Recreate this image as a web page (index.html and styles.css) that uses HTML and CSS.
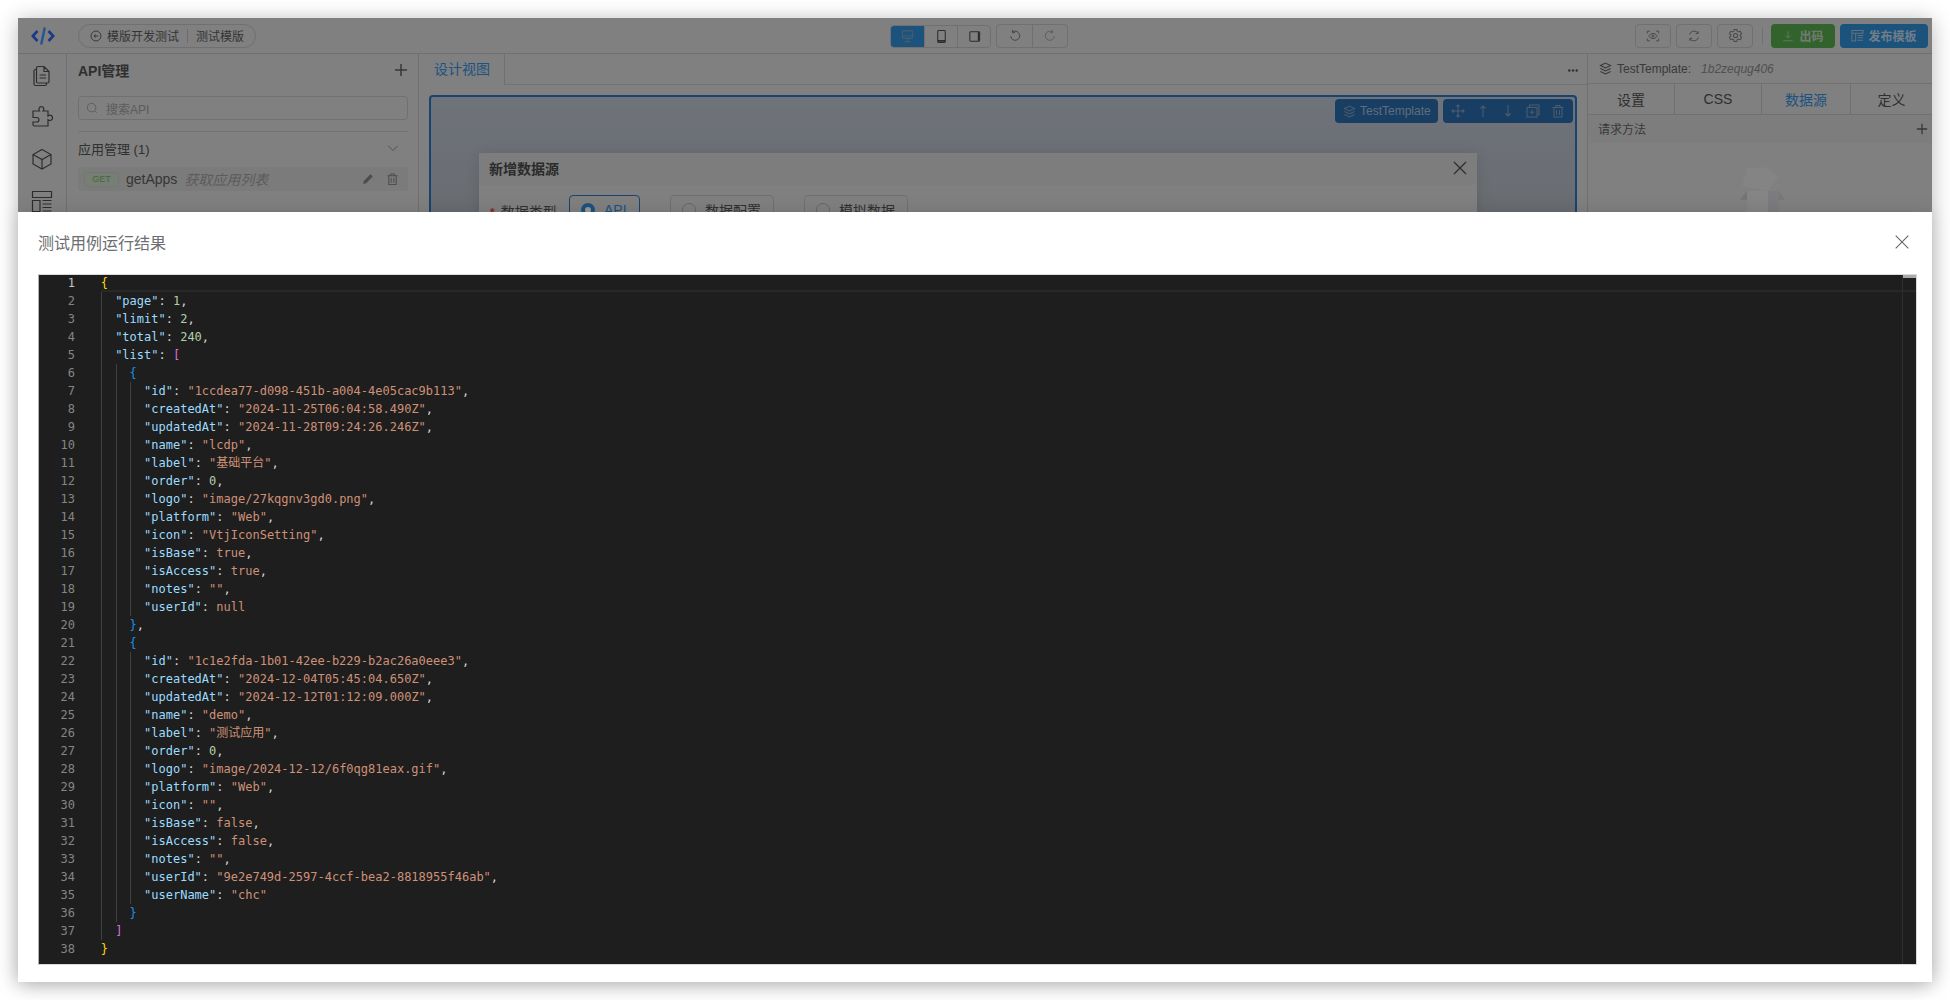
FILE: index.html
```html
<!DOCTYPE html>
<html lang="zh-CN">
<head>
<meta charset="utf-8">
<title>测试用例运行结果</title>
<link rel="stylesheet" href="styles.css">
</head>
<body>
<div class="window">
  <div class="app">
    <header class="topbar">
      <div class="brand">
        <svg class="logo" viewBox="0 0 24 20" width="24" height="20"><path d="M6.5 5 1.8 10l4.7 5M17.5 5l4.7 5-4.7 5" fill="none" stroke="#2c62e0" stroke-width="2.6"/><path d="M13.8 1.5 10.2 18.5" fill="none" stroke="#3a8ff0" stroke-width="2.4"/></svg>
        <div class="crumb">
          <svg class="ico" viewBox="0 0 14 14" width="12" height="12"><circle cx="7" cy="7" r="5.8"/><path d="M9.5 7H4.8M6.6 5 4.6 7l2 2"/></svg>
          <span>模版开发测试</span><i class="crumb-sep"></i><span>测试模版</span>
        </div>
      </div>
      <div class="center-tools">
        <div class="seg seg-low">
          <button class="seg-btn on"><svg class="ico" viewBox="0 0 16 16" width="15" height="15"><rect x="2.5" y="2" width="11" height="8" rx="1"/><path d="M2.5 7.5h11M8 10v3M4.5 13.5h7"/></svg></button>
          <button class="seg-btn"><svg class="ico" viewBox="0 0 16 16" width="15" height="15"><rect x="4" y="1.5" width="8" height="13" rx="1"/><path d="M4 12.6h8" stroke-width="2"/></svg></button>
          <button class="seg-btn"><svg class="ico" viewBox="0 0 16 16" width="15" height="15"><rect x="3" y="3" width="10.5" height="10" rx="1"/><path d="M12.5 3.5v9" stroke-width="2"/></svg></button>
        </div>
        <div class="seg">
          <button class="seg-btn wide"><svg class="ico" viewBox="0 0 16 16" width="14" height="14"><path d="M5 3.6A5.2 5.2 0 1 1 3 8M5.3 1 5 3.9l3 .4"/></svg></button>
          <button class="seg-btn wide faint"><svg class="ico" viewBox="0 0 16 16" width="14" height="14"><path d="M11 3.6A5.2 5.2 0 1 0 13 8M10.7 1l.3 2.9-3 .4"/></svg></button>
        </div>
      </div>
      <div class="actions">
        <button class="act"><svg class="ico" viewBox="0 0 16 16" width="14" height="14"><path d="M1.5 5V2.5h3M11.5 2.5h3V5M14.5 11v2.5h-3M4.5 13.5h-3V11M3 8s2-3 5-3 5 3 5 3-2 3-5 3-5-3-5-3z"/><circle cx="8" cy="8" r="1.2"/></svg></button>
        <button class="act"><svg class="ico" viewBox="0 0 16 16" width="14" height="14"><path d="M3 6.5A5.2 5.2 0 0 1 12.6 5M13 9.5A5.2 5.2 0 0 1 3.4 11M12.8 2.4V5.2H10M3.2 13.6V10.8H6"/></svg></button>
        <button class="act"><svg class="ico" viewBox="0 0 16 16" width="15" height="15"><path d="M6.6 1.5h2.8l.4 1.9 1.5.8 1.8-.7 1.4 2.4-1.4 1.3v1.6l1.4 1.3-1.4 2.4-1.8-.7-1.5.8-.4 1.9H6.6l-.4-1.9-1.5-.8-1.8.7-1.4-2.4 1.4-1.3V7.2L1.500 5.900l1.400-2.400 1.800.7 1.500-.8z"/><circle cx="8" cy="8" r="2.2"/></svg></button>
        <i class="act-sep"></i>
        <button class="cta green"><svg class="ico" viewBox="0 0 14 14" width="12" height="12"><path d="M7 1.500v7.500M4 6.500 7 9.500l3-3M1.500 12.500h11"/></svg>出码</button>
        <button class="cta blue"><svg class="ico" viewBox="0 0 14 14" width="13" height="13"><path d="M1 1.500h12v3H1zM1 4.500v8.500h4v-8.500M7 7h6M7 9.500h6M7 12h6"/></svg>发布模板</button>
      </div>
    </header>
    <div class="workspace">
      <nav class="rail">
        <svg class="ico rail-ico" viewBox="0 0 24 24" width="24" height="26"><path d="M8 3.500h6l5 5v10a1.500 1.500 0 0 1-1.500 1.500H8A1.500 1.500 0 0 1 6.500 18.500V5A1.500 1.500 0 0 1 8 3.500zM14 3.500v5h5M9.500 12h6.500M9.500 15h6.500"/><path d="M6.500 6.500H5.500A1.500 1.500 0 0 0 4 8v13a1.500 1.500 0 0 0 1.500 1.500H15a1.500 1.500 0 0 0 1.500-1.500v-1"/></svg>
        <svg class="ico rail-ico" viewBox="0 0 24 24" width="24" height="26"><path d="M9 3.500a2.500 2.500 0 0 1 4.800 0c.2 1-.3 1.800-.8 2.500H18v5c.8-.7 1.500-1 2.300-.8a2.700 2.700 0 0 1 0 5.300c-.8.100-1.500-.2-2.300-.8V21H4.500c-1 0-1.500-.6-1.500-1.500V17h3.500c1.500 0 2.500-1 2.500-2.200s-1-2.300-2.500-2.300H3V6h6.500C9 5.300 8.800 4.500 9 3.500z"/></svg>
        <svg class="ico rail-ico" viewBox="0 0 24 24" width="24" height="26"><path d="M12 2.500 21 7.500v9.500l-9 5-9-5V7.500zM3 7.500l9 5 9-5M12 12.500V22"/></svg>
        <svg class="ico rail-ico" viewBox="0 0 24 24" width="24" height="26"><path d="M2.500 2.500h19v6h-19zM2.500 11.500h7.500v11h-7.500zM12.500 11.500h9M12.500 15h9M12.500 18.500h9M12.500 22h9"/></svg>
      </nav>
      <aside class="panel">
        <div class="panel-head"><strong>API管理</strong><svg class="ico plus" viewBox="0 0 14 14" width="14" height="14"><path d="M7 1v12M1 7h12"/></svg></div>
        <div class="search"><svg class="ico light" viewBox="0 0 14 14" width="12" height="12"><circle cx="6.500" cy="6.500" r="5"/><path d="M10 10l2.500 2.500"/></svg><span>搜索API</span></div>
        <div class="group-row"><span>应用管理 (1)</span><svg class="ico" viewBox="0 0 14 14" width="12" height="12"><path d="M1.500 4.500 7 10l5.500-5.500"/></svg></div>
        <div class="api-row">
          <span class="tag">GET</span><span class="api-name">getApps</span><em class="api-desc">获取应用列表</em>
          <span class="row-icons">
            <svg viewBox="0 0 14 14" width="12" height="14"><path class="solid" d="M9.800 1.500 12.500 4.200 4.800 11.900 1.200 12.800 2.100 9.200z"/></svg>
            <svg class="ico" viewBox="0 0 14 14" width="13" height="14"><path d="M1.500 3.500h11M5 3.500V1.500h4v2M3 3.500v9.500h8V3.500M5.500 6v5M8.500 6v5"/></svg>
          </span>
        </div>
      </aside>
      <main class="stage">
        <div class="stage-tabs"><div class="stage-tab">设计视图</div><div class="stage-tab-fill"><svg class="dots" viewBox="0 0 10 3" width="10" height="3"><circle cx="1.300" cy="1.500" r="1.200"/><circle cx="5" cy="1.500" r="1.200"/><circle cx="8.700" cy="1.500" r="1.200"/></svg></div></div>
        <div class="canvas">
          <div class="canvas-tools">
            <span class="el-name"><svg class="ico pale" viewBox="0 0 14 14" width="13" height="13"><path d="M7 1.200 12.500 3.800 7 6.400 1.500 3.800zM1.500 7 7 9.600 12.500 7M1.500 10.200 7 12.800l5.500-2.600"/></svg>TestTemplate</span>
            <span class="el-tools">
              <svg class="ico pale" viewBox="0 0 14 14" width="14" height="14"><path d="M7 1v12M1 7h12M5.500 2.500 7 1l1.500 1.500M5.500 11.500 7 13l1.500-1.500M2.500 5.500 1 7l1.500 1.500M11.500 5.500 13 7l-1.500 1.500"/></svg>
              <svg class="ico pale" viewBox="0 0 14 14" width="14" height="14"><path d="M7 13V2M4.500 4.500 7 2l2.500 2.500"/></svg>
              <svg class="ico pale" viewBox="0 0 14 14" width="14" height="14"><path d="M7 1v11M4.500 9.500 7 12l2.500-2.500"/></svg>
              <svg class="ico pale" viewBox="0 0 14 14" width="14" height="14"><rect x="1" y="3.500" width="10" height="9.500"/><path d="M3.500 3.500V1h9.500v9.500H11M6 6v4.500M3.700 8.200h4.600"/></svg>
              <svg class="ico pale" viewBox="0 0 14 14" width="14" height="14"><path d="M1.500 3.500h11M5 3.500V1.500h4v2M3 3.500v9.500h8V3.500M5.500 6v5M8.500 6v5"/></svg>
            </span>
          </div>
          <section class="inner-dialog">
            <div class="inner-head"><span>新增数据源</span><svg class="ico dark" viewBox="0 0 14 14" width="14" height="14"><path d="M1 1l12 12M13 1 1 13"/></svg></div>
            <div class="inner-body">
              <label class="field"><b>*</b>数据类型</label>
              <span class="radio checked"><i></i>API</span>
              <span class="radio r2"><i></i>数据配置</span>
              <span class="radio r3"><i></i>模拟数据</span>
            </div>
          </section>
        </div>
      </main>
      <aside class="props">
        <div class="props-head"><svg class="ico" viewBox="0 0 14 14" width="13" height="13"><path d="M7 1.200 12.500 3.800 7 6.400 1.500 3.800zM1.500 7 7 9.600 12.500 7M1.500 10.200 7 12.800l5.500-2.600"/></svg><span>TestTemplate:</span><em>1b2zequg406</em></div>
        <div class="props-tabs"><div>设置</div><div>CSS</div><div class="on">数据源</div><div>定义</div></div>
        <div class="props-row"><span>请求方法</span><svg class="ico plus" viewBox="0 0 14 14" width="12" height="12"><path d="M7 1v12M1 7h12"/></svg></div>
        <div class="empty">
          <svg viewBox="0 0 50 46" width="50" height="46"><path d="M8 1 26 0 40 9 29 24 3 19z" fill="#dcdcde" /><path d="M8 24h32v22H8z" fill="#dedee0"/><path d="M29 24h11v22H29z" fill="#cfcfd3"/><path d="M8 24 1 33h7z" fill="#c4c4c7"/><path d="M40 24l6 9h-6z" fill="#c8c8cc"/></svg>
        </div>
      </aside>
    </div>
  </div>
  <div class="overlay"></div>
  <section class="modal">
    <div class="modal-head"><span>测试用例运行结果</span><svg class="ico modal-close" viewBox="0 0 14 14" width="14" height="14"><path d="M.7.7l12.600 12.600M13.300.7.7 13.300"/></svg></div>
    <div class="editor">
      <i class="guide g1"></i><i class="guide g2"></i><i class="guide g3"></i><i class="guide g4"></i>
      <i class="ruler"></i><i class="deco"></i>
      <div class="line active"><span class="num">1</span><span class="code"><span class="y">{</span></span></div>
      <div class="line"><span class="num">2</span><span class="code">  <span class="k">"page"</span>: <span class="n">1</span>,</span></div>
      <div class="line"><span class="num">3</span><span class="code">  <span class="k">"limit"</span>: <span class="n">2</span>,</span></div>
      <div class="line"><span class="num">4</span><span class="code">  <span class="k">"total"</span>: <span class="n">240</span>,</span></div>
      <div class="line"><span class="num">5</span><span class="code">  <span class="k">"list"</span>: <span class="p">[</span></span></div>
      <div class="line"><span class="num">6</span><span class="code">    <span class="u">{</span></span></div>
      <div class="line"><span class="num">7</span><span class="code">      <span class="k">"id"</span>: <span class="s">"1ccdea77-d098-451b-a004-4e05cac9b113"</span>,</span></div>
      <div class="line"><span class="num">8</span><span class="code">      <span class="k">"createdAt"</span>: <span class="s">"2024-11-25T06:04:58.490Z"</span>,</span></div>
      <div class="line"><span class="num">9</span><span class="code">      <span class="k">"updatedAt"</span>: <span class="s">"2024-11-28T09:24:26.246Z"</span>,</span></div>
      <div class="line"><span class="num">10</span><span class="code">      <span class="k">"name"</span>: <span class="s">"lcdp"</span>,</span></div>
      <div class="line"><span class="num">11</span><span class="code">      <span class="k">"label"</span>: <span class="s">"基础平台"</span>,</span></div>
      <div class="line"><span class="num">12</span><span class="code">      <span class="k">"order"</span>: <span class="n">0</span>,</span></div>
      <div class="line"><span class="num">13</span><span class="code">      <span class="k">"logo"</span>: <span class="s">"image/27kqgnv3gd0.png"</span>,</span></div>
      <div class="line"><span class="num">14</span><span class="code">      <span class="k">"platform"</span>: <span class="s">"Web"</span>,</span></div>
      <div class="line"><span class="num">15</span><span class="code">      <span class="k">"icon"</span>: <span class="s">"VtjIconSetting"</span>,</span></div>
      <div class="line"><span class="num">16</span><span class="code">      <span class="k">"isBase"</span>: <span class="s">true</span>,</span></div>
      <div class="line"><span class="num">17</span><span class="code">      <span class="k">"isAccess"</span>: <span class="s">true</span>,</span></div>
      <div class="line"><span class="num">18</span><span class="code">      <span class="k">"notes"</span>: <span class="s">""</span>,</span></div>
      <div class="line"><span class="num">19</span><span class="code">      <span class="k">"userId"</span>: <span class="s">null</span></span></div>
      <div class="line"><span class="num">20</span><span class="code">    <span class="u">}</span>,</span></div>
      <div class="line"><span class="num">21</span><span class="code">    <span class="u">{</span></span></div>
      <div class="line"><span class="num">22</span><span class="code">      <span class="k">"id"</span>: <span class="s">"1c1e2fda-1b01-42ee-b229-b2ac26a0eee3"</span>,</span></div>
      <div class="line"><span class="num">23</span><span class="code">      <span class="k">"createdAt"</span>: <span class="s">"2024-12-04T05:45:04.650Z"</span>,</span></div>
      <div class="line"><span class="num">24</span><span class="code">      <span class="k">"updatedAt"</span>: <span class="s">"2024-12-12T01:12:09.000Z"</span>,</span></div>
      <div class="line"><span class="num">25</span><span class="code">      <span class="k">"name"</span>: <span class="s">"demo"</span>,</span></div>
      <div class="line"><span class="num">26</span><span class="code">      <span class="k">"label"</span>: <span class="s">"测试应用"</span>,</span></div>
      <div class="line"><span class="num">27</span><span class="code">      <span class="k">"order"</span>: <span class="n">0</span>,</span></div>
      <div class="line"><span class="num">28</span><span class="code">      <span class="k">"logo"</span>: <span class="s">"image/2024-12-12/6f0qg81eax.gif"</span>,</span></div>
      <div class="line"><span class="num">29</span><span class="code">      <span class="k">"platform"</span>: <span class="s">"Web"</span>,</span></div>
      <div class="line"><span class="num">30</span><span class="code">      <span class="k">"icon"</span>: <span class="s">""</span>,</span></div>
      <div class="line"><span class="num">31</span><span class="code">      <span class="k">"isBase"</span>: <span class="s">false</span>,</span></div>
      <div class="line"><span class="num">32</span><span class="code">      <span class="k">"isAccess"</span>: <span class="s">false</span>,</span></div>
      <div class="line"><span class="num">33</span><span class="code">      <span class="k">"notes"</span>: <span class="s">""</span>,</span></div>
      <div class="line"><span class="num">34</span><span class="code">      <span class="k">"userId"</span>: <span class="s">"9e2e749d-2597-4ccf-bea2-8818955f46ab"</span>,</span></div>
      <div class="line"><span class="num">35</span><span class="code">      <span class="k">"userName"</span>: <span class="s">"chc"</span></span></div>
      <div class="line"><span class="num">36</span><span class="code">    <span class="u">}</span></span></div>
      <div class="line"><span class="num">37</span><span class="code">  <span class="p">]</span></span></div>
      <div class="line"><span class="num">38</span><span class="code"><span class="y">}</span></span></div>
    </div>
  </section>
</div>
</body>
</html>
```

FILE: styles.css
```css
* { box-sizing: border-box; }
html, body { margin: 0; height: 100%; background: #fff; overflow: hidden; }
body { padding: 18px; font-family: "Liberation Sans", "Noto Sans CJK SC", sans-serif; color: #585858; font-size: 12px; }
button { font: inherit; color: inherit; padding: 0; background: none; border: 0; }
em { font-style: italic; }

.window { position: relative; width: 1914px; height: 964px; box-shadow: 0 2px 20px rgba(0, 0, 0, .28); background: #fff; }
.app { height: 100%; overflow: hidden; background: #d5d5d5; }
.overlay { position: absolute; inset: 0; background: rgba(0, 0, 0, .4); }

.ico { fill: none; stroke: #5c5c5c; stroke-width: 1.100; flex: none; }
.ico.light { stroke: #9a9a9a; }
.ico.pale { stroke: #7d9ab8; }
.ico.dark { stroke: #4c4c4c; stroke-width: 1.300; }

/* top bar */
.topbar { height: 36px; display: grid; grid-template-columns: 872px auto 1fr; align-items: center; border-bottom: 1px solid #bbb; }
.brand { display: flex; align-items: center; padding-left: 13px; gap: 23px; }
.logo { flex: none; }
.crumb { display: flex; align-items: center; height: 24px; width: 178px; border: 1px solid #bbb; border-radius: 12px; padding-left: 11px; gap: 4px; color: #585858; }
.crumb .ico { stroke: #585858; margin-right: 1px; }
.crumb-sep { width: 1px; height: 14px; background: #b4b4b4; margin: 0 4px; }
.center-tools { display: flex; gap: 5px; align-items: center; }
.seg { display: flex; height: 24px; border: 1px solid #bbb; border-radius: 4px; overflow: hidden; }
.seg-low { height: 23px; margin-top: 1px; }
.seg-btn { width: 33px; display: flex; align-items: center; justify-content: center; border-left: 1px solid #bbb; }
.seg-btn:first-child { border-left: 0; }
.seg-btn .ico { stroke: #4a4a4a; }
.seg-btn.on { width: 34px; background: #2d8ad0; margin: -1px 0 -1px -1px; }
.seg-btn.on .ico { stroke: #7d9ab8; }
.seg-btn.wide { width: 35px; }
.seg-btn.wide .ico { stroke: #747474; }
.seg-btn.wide.faint .ico { stroke: #9a9a9a; }
.actions { display: flex; align-items: center; justify-content: flex-end; padding-right: 4px; gap: 5px; }
.act { width: 36px; height: 24px; border: 1px solid #bbb; border-radius: 4px; display: flex; align-items: center; justify-content: center; }
.act .ico { stroke: #7a7a7a; }
.act-sep { width: 1px; height: 16px; background: #bbb; margin: 0 3.500px; }
.cta { height: 24px; border-radius: 4px; color: #c0ccc0; font-weight: 700; display: flex; align-items: center; justify-content: center; gap: 5px; }
.cta .ico { stroke: #a8c0a8; }
.cta.green { width: 64px; background: #56a64a; }
.cta.blue { width: 88px; background: #2d8ad0; gap: 4px; color: #bcd0e4; }
.cta.blue .ico { stroke: #a4bcd0; }

/* workspace */
.workspace { display: grid; grid-template-columns: 49px 352px 1fr 344px; height: 928px; }
.rail { display: flex; flex-direction: column; align-items: center; gap: 16px; padding-top: 8px; border-right: 1px solid #bbb; }
.rail-ico { stroke-width: 1.200; stroke: #4c4c4c; }
.panel { padding: 0 10px 0 11px; border-right: 1px solid #bbb; }
.panel-head { display: flex; justify-content: space-between; align-items: center; height: 33px; padding-bottom: 1px; font-size: 14px; color: #505050; }
.plus { stroke-width: 1.500; }
.search { height: 24px; margin-top: 9px; display: flex; align-items: center; gap: 8px; padding-left: 7px; border: 1px solid #bbb; border-radius: 4px; color: #9a9a9a; }
.group-row { display: flex; align-items: center; justify-content: space-between; height: 36px; margin-top: 11px; border-top: 1px solid #c0c0c0; font-size: 13px; padding: 0 9px 3px 0; color: #505050; }
.group-row .ico { stroke: #808080; }
.api-row { height: 24px; display: flex; align-items: center; background: #cdcdcd; border-radius: 3px; padding: 0 9px 0 6px; }
.tag { width: 35px; height: 15px; line-height: 13px; text-align: center; font-size: 9px; color: #6cb05e; background: #c5d2c3; border: 1px solid #bccbb8; border-radius: 2px; margin-right: 7px; }
.api-name { font-size: 14px; color: #5a5a5a; margin-right: 7px; }
.api-desc { font-size: 14px; color: #9a9a9a; }
.row-icons { margin-left: auto; display: flex; align-items: center; gap: 12px; }
.row-icons .ico { stroke: #808080; }
.solid { fill: #808080; }

.stage { display: flex; flex-direction: column; min-width: 0; border-right: 1px solid #bbb; }
.stage-tabs { display: flex; height: 31px; flex: none; }
.stage-tab { width: 86px; padding-left: 15px; line-height: 31px; font-size: 14px; color: #2f8ad6; border-right: 1px solid #bbb; }
.stage-tab-fill { flex: 1; display: flex; align-items: center; justify-content: flex-end; padding: 2px 9px 0 0; border-bottom: 1px solid #c0c0c0; }
.dots { fill: #505050; }
.canvas { margin: 10px 10px 0; flex: 1; border: 2px solid #2a70bc; border-bottom: 0; border-radius: 4px 4px 0 0; background: linear-gradient(#b9c0cb, #aeb4bc 130px); padding-top: 2px; overflow: hidden; }
.canvas-tools { display: flex; justify-content: flex-end; gap: 5px; height: 24px; padding-right: 2px; }
.el-name, .el-tools { display: flex; align-items: center; height: 24px; border-radius: 4px; background: #2a68a6; color: #a0b4c8; }
.el-name { width: 103px; font-size: 12px; padding-left: 8px; gap: 4px; }
.el-tools { width: 130px; justify-content: space-around; padding: 0 3px; }
.inner-dialog { margin: 30px 98px 0 48px; background: #d6d6d6; box-shadow: 0 2px 14px rgba(0, 0, 0, .12); height: 200px; }
.inner-head { height: 32px; display: flex; align-items: center; justify-content: space-between; padding: 0 10px 2px; background: #d1d1d1; font-size: 14px; font-weight: 700; color: #484848; }
.inner-body { display: flex; padding-top: 10px; font-size: 14px; color: #505050; }
.field { width: 90px; padding: 6px 0 0 11px; }
.field b { color: #e04040; margin-right: 6px; font-size: 12px; }
.radio { height: 32px; width: 71px; border: 1px solid #2a70bc; border-radius: 4px; display: flex; align-items: center; gap: 9px; padding: 0 0 2px 11px; color: #2f8ad6; }
.radio i { width: 14px; height: 14px; border-radius: 50%; border: 4px solid #2d8ad0; background: #fff; flex: none; }
.radio.r2, .radio.r3 { border-color: #bbb; color: #505050; width: 104px; margin-left: 30px; }
.radio.r2 i, .radio.r3 i { border: 1px solid #aaa; background: none; }

.props { display: flex; flex-direction: column; }
.props-head { height: 30px; display: flex; align-items: center; padding-left: 11px; gap: 5px; border-bottom: 1px solid #bbb; color: #626262; }
.props-head em { margin-left: 5px; color: #868686; }
.props-tabs { display: grid; grid-template-columns: 87px 87px 89px 81px; height: 31px; border-bottom: 1px solid #bbb; font-size: 14px; }
.props-tabs div { display: flex; align-items: center; justify-content: center; border-right: 1px solid #bbb; color: #505050; }
.props-tabs div:last-child { border-right: 0; }
.props-tabs .on { color: #2f8ad6; }
.props-row { height: 28px; display: flex; align-items: center; justify-content: space-between; padding: 0 4px 1px 10px; background: #d0d0d0; color: #626262; }
.empty { display: flex; justify-content: center; padding: 24px 0 0 8px; }

/* modal */
.modal { position: absolute; left: 0; right: 0; bottom: 0; height: 770px; background: #fff; box-shadow: 0 0 18px rgba(0, 0, 0, .12); padding: 0 15px 17px 20px; }
.modal-head { height: 62px; display: flex; align-items: center; justify-content: space-between; padding: 0 8px 2px 0; font-size: 16px; color: #6c6e72; }
.modal-close { stroke: #666; stroke-width: 1.100; }

.editor { position: relative; height: 691px; border: 1px solid #d8dae0; border-left-color: #aeb0b4; background: #1e1e1e; font-family: "DejaVu Sans Mono", "Noto Sans CJK SC", monospace; font-size: 12px; line-height: 18px; color: #d4d4d4; overflow: hidden; }
.line { display: flex; height: 18px; }
.num { width: 36px; flex: none; text-align: right; color: #858585; }
.active { margin-top: -1px; }
.active .num { color: #c6c6c6; }
.code { flex: 1; white-space: pre; padding-left: 25.700px; }
.active .code { box-shadow: inset 0 -2px #282828; margin-left: 25.700px; padding-left: 0; }
.k { color: #9cdcfe; }
.s { color: #ce9178; }
.n { color: #b5cea8; }
.y { color: #ffd700; }
.p { color: #da70d6; }
.u { color: #1a8fe8; }
.guide { position: absolute; width: 1px; background: #404040; }
.g1 { left: 62px; top: 17px; height: 648px; }
.g2 { left: 76.500px; top: 89px; height: 558px; }
.g3 { left: 91px; top: 107px; height: 234px; }
.g4 { left: 91px; top: 377px; height: 252px; }
.ruler { position: absolute; top: 0; bottom: 0; right: 13px; width: 1px; background: #2f2f2f; }
.deco { position: absolute; top: 0; right: 0; width: 13px; height: 3px; background: #a9a9a9; }
```
